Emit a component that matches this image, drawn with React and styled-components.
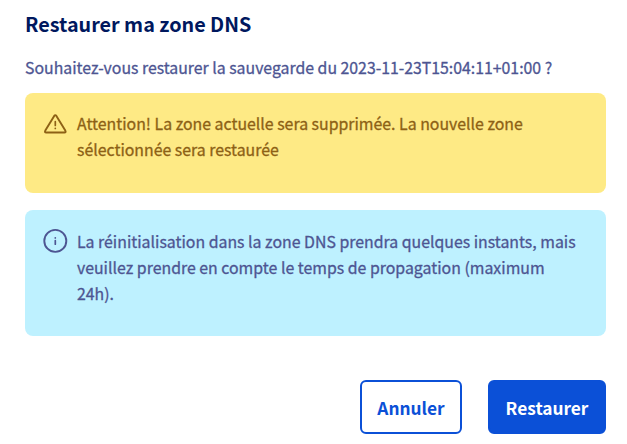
import React from "react";
import styled, { createGlobalStyle } from "styled-components";

const GlobalStyle = createGlobalStyle`
  * { box-sizing: border-box; }
  body {
    margin: 0;
    background: #fff;
    font-family: "Noto Sans CJK JP", "Noto Sans", sans-serif;
    overflow: hidden;
  }
`;

const Dialog = styled.main`
  height: 444px;
  padding: 11px 21px 0 25px;
  display: flex;
  flex-direction: column;
`;

const Title = styled.h1`
  margin: 0;
  color: #00185e;
  font-size: 19.75px;
  line-height: 26px;
  font-weight: 700;
`;

const Question = styled.p`
  margin: 18px 0 12px;
  color: #4d5592;
  font-size: 15.83px;
  line-height: 26px;
  white-space: nowrap;
  -webkit-text-stroke: 0.3px currentColor;
`;

const Message = styled.section`
  display: flex;
  gap: 9px;
  height: ${(p) => p.$height}px;
  margin-bottom: 17px;
  padding: 18px 18px 0;
  border-radius: 8px;
  color: ${(p) => (p.$warning ? "#8d6115" : "#4d5592")};
  background: ${(p) => (p.$warning ? "#feea85" : "#bef1ff")};
`;

const MessageIcon = styled.svg`
  flex: none;
  width: 25px;
  height: 25px;
  fill: none;
  stroke: currentColor;
  stroke-linecap: round;
  stroke-linejoin: round;
`;

const MessageText = styled.p`
  margin: 0;
  padding-top: ${(p) => p.$offset || 0}px;
  font-size: 15.87px;
  line-height: 26px;
  white-space: nowrap;
  -webkit-text-stroke: 0.3px currentColor;
`;

const Actions = styled.footer`
  display: flex;
  justify-content: flex-end;
  gap: 26px;
  margin-top: 27px;
`;

const Button = styled.button`
  width: ${(p) => p.$width}px;
  height: 54px;
  padding: 1px 0 0;
  border: 2px solid #0b50d7;
  border-radius: 6px;
  color: ${(p) => (p.$primary ? "#fff" : "#0b50d7")};
  background: ${(p) => (p.$primary ? "#0b50d7" : "#fff")};
  font: 700 17.3px/26px "Noto Sans CJK JP", "Noto Sans", sans-serif;
`;

export default function App() {
  return (
    <>
      <GlobalStyle />
      <Dialog>
        <Title>Restaurer ma zone DNS</Title>
        <Question>Souhaitez-vous restaurer la sauvegarde du 2023-11-23T15:04:11+01:00 ?</Question>
        <Message $warning $height={100}>
          <MessageIcon viewBox="0 0 25 25">
            <path d="M11.2 4.9 2.3 19.6Q1.3 21.5 3.2 21.5H21.4Q23.3 21.5 22.3 19.6L13.4 4.9Q12.3 3.3 11.2 4.9Z" strokeWidth="1.9" />
            <path d="M12.3 10.5v4M12.3 17.3v.1" strokeWidth="1.7" />
          </MessageIcon>
          <MessageText>
            Attention! La zone actuelle sera supprimée. La nouvelle zone
            <br />
            sélectionnée sera restaurée
          </MessageText>
        </Message>
        <Message $height={126}>
          <MessageIcon viewBox="0 0 25 25">
            <circle cx="12.3" cy="12.9" r="11" strokeWidth="1.9" />
            <path d="M12.3 12.6v3.6M12.3 9.8v.1" strokeWidth="1.7" />
          </MessageIcon>
          <MessageText $offset={1}>
            La réinitialisation dans la zone DNS prendra quelques instants, mais
            <br />
            veuillez prendre en compte le temps de propagation (maximum
            <br />
            24h).
          </MessageText>
        </Message>
        <Actions>
          <Button $width={102}>Annuler</Button>
          <Button $width={118} $primary>Restaurer</Button>
        </Actions>
      </Dialog>
    </>
  );
}
